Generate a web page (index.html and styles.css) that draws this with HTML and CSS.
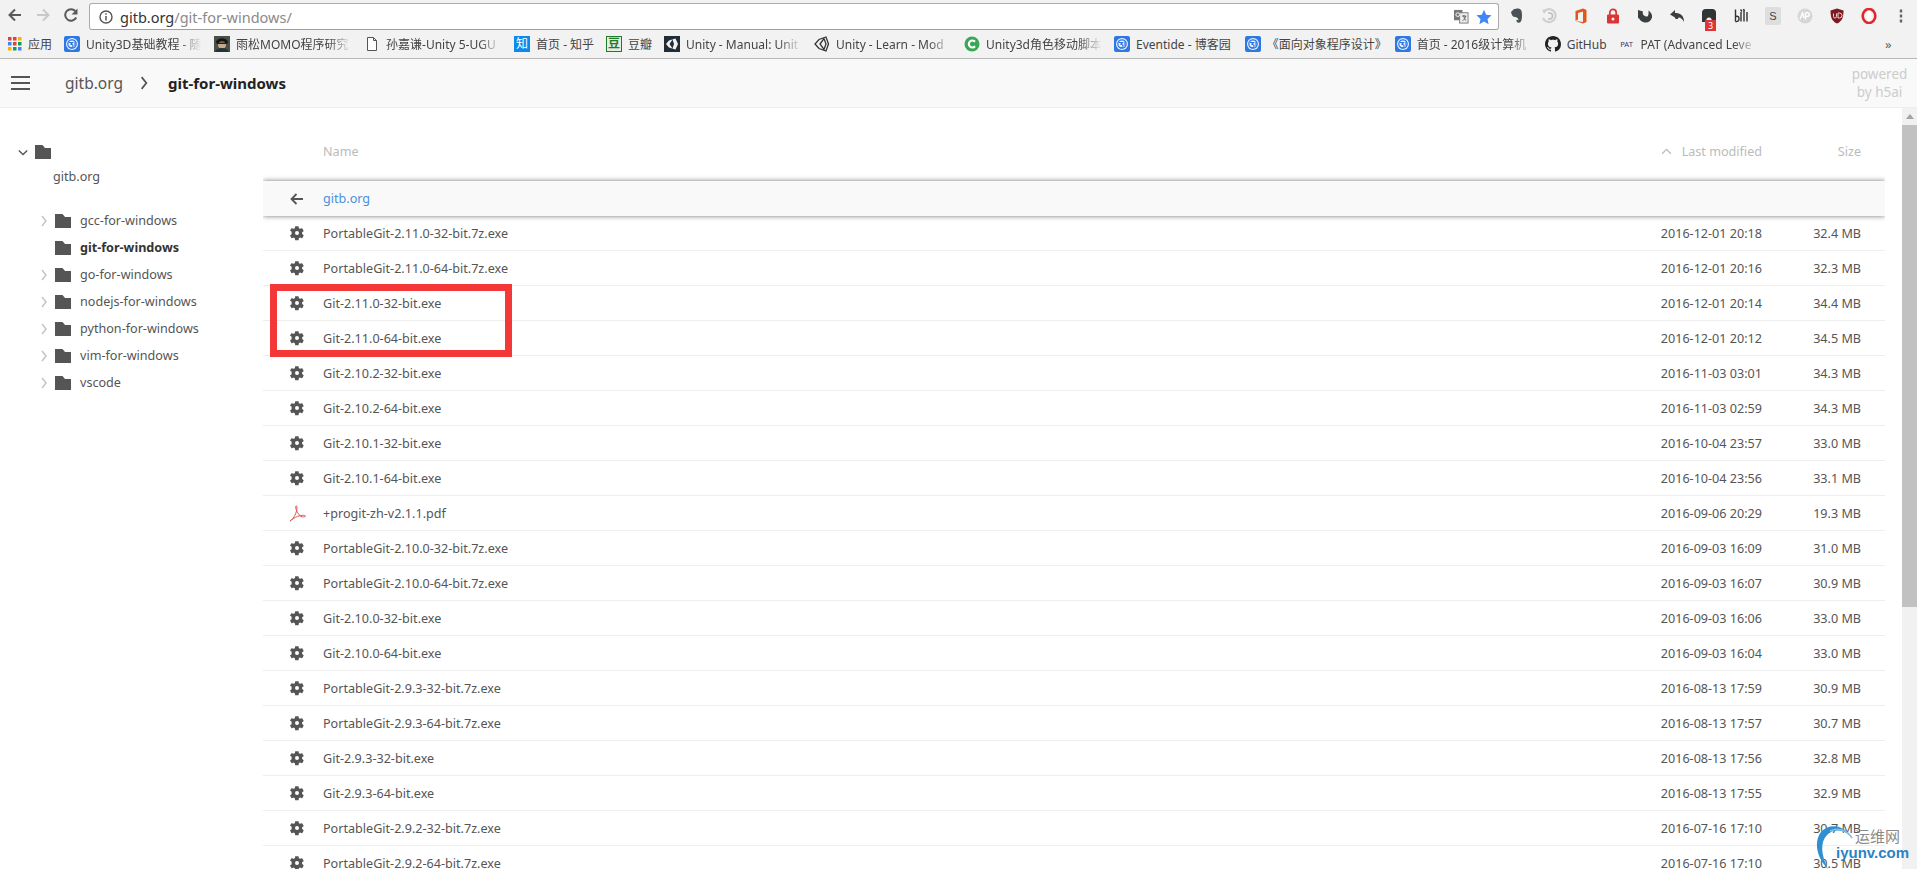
FILE: index.html
```html
<!DOCTYPE html>
<html lang="zh">
<head>
<meta charset="utf-8">
<title>git-for-windows</title>
<link rel="stylesheet" href="styles.css">
</head>
<body>
<svg class="defs" width="0" height="0" aria-hidden="true">
  <symbol id="gear" viewBox="0 0 24 24"><path fill-rule="evenodd" d="M19.6 13c.1-.3.1-.7.1-1s0-.7-.1-1l2.2-1.7c.2-.2.3-.4.1-.7l-2.1-3.6c-.1-.2-.4-.3-.6-.2l-2.6 1c-.5-.4-1.100-.8-1.800-1l-.4-2.700c0-.3-.2-.4-.5-.4h-4.200c-.3 0-.5.2-.5.4l-.4 2.700c-.6.3-1.200.6-1.800 1l-2.600-1c-.2-.1-.5 0-.6.2L1.700 7.900c-.1.2-.1.5.1.700L4 10.300c-.1.300-.1.700-.1 1.700s0 1.400.1 1.700l-2.200 1.700c-.2.2-.3.4-.1.700l2.100 3.600c.1.2.4.3.6.2l2.600-1c.5.4 1.100.8 1.800 1l.4 2.700c0 .3.2.4.5.4h4.200c.3 0 .5-.2.5-.4l.4-2.700c.6-.3 1.200-.6 1.800-1l2.600 1c.2.1.5 0 .6-.2l2.100-3.600c.1-.2.1-.5-.1-.7zM12 15a3 3 0 1 1 0-6 3 3 0 0 1 0 6z"/></symbol>
  <symbol id="folder" viewBox="0 0 16 14"><path d="M0 0h7.500l2.500 3h6v11H0z"/></symbol>
  <symbol id="right" viewBox="0 0 6 12"><path d="M1 1l4 5-4 5" fill="none" stroke="currentColor" stroke-width="1.500"/></symbol>
  <symbol id="blog" viewBox="0 0 16 16"><rect width="16" height="16" rx="2" fill="#2f78e4"/><circle cx="8" cy="8" r="6" fill="#e8f1fd"/><circle cx="8" cy="8" r="4.200" fill="none" stroke="#2f78e4" stroke-width="1.300"/><path d="M5 6.500h3.500L6.500 8.500a1.800 1.800 0 1 1-1 2" fill="none" stroke="#2f78e4" stroke-width="1.200"/><path d="M11 5.500v5" stroke="#2f78e4" stroke-width="1.200"/></symbol>
</svg>

<div class="chrome">
  <div class="toolbar">
    <div class="nav">
      <svg class="nav-ico" viewBox="0 0 16 16"><path d="M14 8H3M8 2.500L2.500 8 8 13.500" fill="none" stroke="#5a5a5a" stroke-width="2"/></svg>
      <svg class="nav-ico" viewBox="0 0 16 16"><path d="M2 8h11M8 2.500L13.500 8 8 13.500" fill="none" stroke="#c9c9c9" stroke-width="2"/></svg>
      <svg class="nav-ico" viewBox="0 0 16 16"><path d="M13.200 10.500A5.800 5.800 0 1 1 12.400 4.200" fill="none" stroke="#5a5a5a" stroke-width="2"/><path d="M14.500 1.500v6h-6z" fill="#5a5a5a"/></svg>
    </div>
    <div class="omnibox">
      <svg class="info" viewBox="0 0 14 14"><circle cx="7" cy="7" r="6" fill="none" stroke="#555" stroke-width="1.400"/><path d="M7 6v4.500M7 3.300v1.500" stroke="#555" stroke-width="1.500"/></svg>
      <span class="url"><span class="url-host">gitb.org</span>/git-for-windows/</span>
      <svg class="tr" viewBox="0 0 16 16"><rect x="0" y="1" width="9" height="11" fill="#777"/><rect x="6" y="4" width="9" height="11" fill="#eee" stroke="#777"/><path d="M8.500 7.500h4.500M10.500 6.500c0 3 1 5 2.500 6M12.500 7.500c-.5 2.500-1.500 4-3.500 5" fill="none" stroke="#555" stroke-width=".9"/><circle cx="4" cy="6" r="2" fill="none" stroke="#fff"/></svg>
      <svg class="star" viewBox="0 0 16 16"><path d="M8 .8l2.200 4.900 5.300.6-4 3.600 1.100 5.300L8 12.500l-4.600 2.700 1.100-5.300-4-3.600 5.300-.6z" fill="#4285f4"/></svg>
    </div>
    <div class="exts">
      <span class="ext"><svg viewBox="0 0 16 16"><path d="M2 4l3-3h1.500c1-.8 4-.6 5 .5 1 .6 1.500 3 1.500 6 0 3.500-.5 7-3 7.300-2 0-2.800-1-2.500-2.500.5-.8 1.500-.5 2 0-.5-3-2-3-3.500-3.300C4 9 2.500 7 2 4z" fill="#4a5355"/></svg></span>
      <span class="ext"><svg viewBox="0 0 16 16"><path d="M3 3.500A6.500 6.500 0 1 1 2 10" fill="none" stroke="#cfcfcf" stroke-width="2.200"/><path d="M1 1.500l5 .5-3 4z" fill="#cfcfcf"/><path d="M7 5h1.500a3 3 0 0 1 0 6H7" fill="none" stroke="#bdbdbd" stroke-width="1.500"/></svg></span>
      <span class="ext"><svg viewBox="0 0 16 16"><path d="M2.500 3L10 .5l3.500 1.500v12L10 15.500 2.500 13l7.500 1V3.500L5 5v6.500l-2.500 1.500z" fill="#e0561b"/></svg></span>
      <span class="ext"><svg viewBox="0 0 16 16"><rect x="2" y="6.500" width="12" height="9" rx="1" fill="#dd3333"/><path d="M4.800 7V4.500a3.200 3.200 0 0 1 6.400 0V7" fill="none" stroke="#dd3333" stroke-width="1.700"/><circle cx="8" cy="11" r="1.500" fill="#fff"/></svg></span>
      <span class="ext"><svg viewBox="0 0 16 16"><path d="M1 2l5 1.500C5 6 7 8.500 10 8.500c1 0 2-2 1.500-6C14 4 15.500 7 15 9.500c-.8 3.500-4 5.500-7.500 5C4.500 14 2.500 12 2 10L1 10.500z" fill="#3a3f42"/></svg></span>
      <span class="ext"><svg viewBox="0 0 16 16"><path d="M1 6.500L6 2v3c5 0 9 2 9 9-1.500-3-3.500-4.500-5-4.500-.5 0-1 .5-1 1.500H6.500L6 9.500z" fill="#3a3f42"/></svg></span>
      <span class="ext ext-badged"><svg viewBox="0 0 16 16"><path d="M1 14V4.500C1 2.500 2.500 1 4.500 1h7c2 0 3.500 1.500 3.500 3.500V14h-4c0-3-1-4.500-3-4.500S5 11 5 14z" fill="#2f3437"/></svg><span class="badge">3</span></span>
      <span class="ext"><svg viewBox="0 0 16 16"><path d="M2.500 1.500v12M2.500 8.500c3-1 3.500 1 3.500 2.500s-1 3-3.500 2.500M8 4v9.500M11 2v11.500M14 4v9.500M7.500 1.500l1.500 2M10.500 1l1 2" fill="none" stroke="#333" stroke-width="1.400"/></svg></span>
      <span class="ext"><span class="ext-s">S</span></span>
      <span class="ext"><svg viewBox="0 0 16 16"><circle cx="8" cy="8" r="7.500" fill="#d6d6d6"/><path d="M3 11l2.500-6 1.500 5M8.500 4.500v7M8.500 5c3-1 4.500.5 3.500 2.500-.7 1-2 1-3.500.8" fill="none" stroke="#fff" stroke-width="1.400"/></svg></span>
      <span class="ext"><svg viewBox="0 0 16 16"><path d="M8 .5l6.500 2c0 7-1.500 11-6.500 13-5-2-6.500-6-6.500-13z" fill="#7d1a1e"/><path d="M4.500 5.500v3a1.500 1.500 0 0 0 3 0v-3M9 5h1.500a2.500 2.500 0 0 1 0 5H9z" fill="none" stroke="#e8d9d9" stroke-width="1"/></svg></span>
      <span class="ext"><svg viewBox="0 0 16 16"><ellipse cx="8" cy="8" rx="6.300" ry="7" fill="none" stroke="#e1282d" stroke-width="2.600"/><ellipse cx="8" cy="8" rx="2.500" ry="5.200" fill="#fff"/></svg></span>
      <span class="ext"><svg viewBox="0 0 16 16"><path d="M8 1.500v3M8 6.500v3M8 11.500v3" stroke="#666" stroke-width="2.400"/></svg></span>
    </div>
  </div>
  <div class="bookmarks">
    <span class="bm"><svg class="fav-apps" viewBox="0 0 14 14"><g><rect width="3.500" height="3.500" fill="#db4437"/><rect x="5" width="3.500" height="3.500" fill="#db4437"/><rect x="10" width="3.500" height="3.500" fill="#f4b400"/><rect y="5" width="3.500" height="3.500" fill="#4285f4"/><rect x="5" y="5" width="3.500" height="3.500" fill="#db4437"/><rect x="10" y="5" width="3.500" height="3.500" fill="#0f9d58"/><rect y="10" width="3.500" height="3.500" fill="#f4b400"/><rect x="5" y="10" width="3.500" height="3.500" fill="#0f9d58"/><rect x="10" y="10" width="3.500" height="3.500" fill="#4285f4"/></g></svg><span>应用</span></span>
    <span class="bm"><svg class="fav"><use href="#blog"/></svg><span class="bm-fade">Unity3D基础教程 - 随</span></span>
    <span class="bm"><svg class="fav" viewBox="0 0 16 16"><rect width="16" height="16" fill="#4a4f48"/><path d="M2 6c1-5 11-5 12 0l-1 2H3z" fill="#15181a"/><ellipse cx="8" cy="9" rx="4" ry="3.500" fill="#c9a98c"/><path d="M3 6.500h10v1.500H3z" fill="#1c1f22"/><path d="M1 16c1-3 4-4 7-4s6 1 7 4z" fill="#22343a"/></svg><span class="bm-fade">雨松MOMO程序研究</span></span>
    <span class="bm"><svg class="fav" viewBox="0 0 16 16"><path d="M3.500 1.500h6l3 3v10h-9z M9.500 1.500v3h3" fill="#fff" stroke="#555" stroke-width="1"/></svg><span class="bm-fade">孙嘉谦-Unity 5-UGU</span></span>
    <span class="bm"><span class="fav-zhi">知</span><span class="bm-zhihu">首页 - 知乎</span></span>
    <span class="bm"><span class="fav-dou">豆</span><span class="bm-dou">豆瓣</span></span>
    <span class="bm"><svg class="fav" viewBox="0 0 16 16"><rect width="16" height="16" fill="#222c37"/><path d="M11.500 2.500L5 4.500l-3 3.500 3 3.500 6.500 2L14 8z M5.500 8l3-4.500 1.500 4.500-1.500 4.500z" fill="#f2f2f2" fill-rule="evenodd"/></svg><span class="bm-fade">Unity - Manual: Unit</span></span>
    <span class="bm"><svg class="fav" viewBox="0 0 16 16"><path d="M12 1L5 3.500 1 8l4 4.500 7 2.500 2.500-7z M6 8l4-5.500 2 5.500-2 5.500z" fill="none" stroke="#333" stroke-width="1.300"/></svg><span class="bm-fade">Unity - Learn - Mod</span></span>
    <span class="bm"><svg class="fav" viewBox="0 0 16 16"><circle cx="8" cy="8" r="7.500" fill="#3aa757"/><path d="M11 5.700a3.500 3.500 0 1 0 0 4.600" fill="none" stroke="#fff" stroke-width="2.200"/></svg><span class="bm-fade">Unity3d角色移动脚本</span></span>
    <span class="bm"><svg class="fav"><use href="#blog"/></svg><span>Eventide - 博客园</span></span>
    <span class="bm bm-wide"><svg class="fav"><use href="#blog"/></svg><span class="bm-book">《面向对象程序设计》</span></span>
    <span class="bm"><svg class="fav"><use href="#blog"/></svg><span class="bm-fade">首页 - 2016级计算机</span></span>
    <span class="bm"><svg class="fav" viewBox="0 0 16 16"><path fill="#222" d="M8 0C3.580 0 0 3.580 0 8c0 3.540 2.290 6.530 5.470 7.590.4.070.55-.17.55-.38 0-.19-.01-.82-.01-1.490-2.010.37-2.530-.49-2.690-.94-.09-.23-.48-.94-.82-1.130-.28-.15-.68-.52-.01-.53.63-.01 1.080.58 1.230.82.72 1.210 1.870.87 2.330.66.07-.52.28-.87.51-1.070-1.780-.2-3.640-.89-3.640-3.950 0-.87.31-1.590.82-2.150-.08-.2-.36-1.020.08-2.120 0 0 .67-.21 2.200.82.64-.18 1.320-.27 2-.27.68 0 1.360.09 2 .27 1.530-1.040 2.200-.82 2.200-.82.44 1.100.16 1.920.08 2.120.51.56.82 1.270.82 2.150 0 3.070-1.870 3.750-3.650 3.950.29.25.54.73.54 1.480 0 1.070-.01 1.930-.01 2.200 0 .21.15.46.55.38A8.013 8.013 0 0 0 16 8c0-4.420-3.580-8-8-8z"/></svg><span>GitHub</span></span>
    <span class="bm"><span class="fav-pat">PAT</span><span class="bm-fade">PAT (Advanced Leve</span></span>
    <span class="bm-more">»</span>
  </div>
</div>

<header class="crumbs">
  <span class="burger"></span>
  <span class="crumb">gitb.org</span>
  <svg class="crumb-sep"><use href="#right"/></svg>
  <span class="crumb crumb-active">git-for-windows</span>
  <span class="powered">powered<br>by h5ai</span>
</header>

<div class="main">
  <aside class="sidebar">
    <div class="root-row">
      <svg class="root-caret" viewBox="0 0 12 8"><path d="M1 1.500l5 5 5-5" fill="none" stroke="#555" stroke-width="1.600"/></svg>
      <svg class="root-folder"><use href="#folder"/></svg>
    </div>
    <div class="root-name">gitb.org</div>
    <ul class="tree">
      <li class="tree-row"><svg class="tree-caret"><use href="#right"/></svg><svg class="tree-folder"><use href="#folder"/></svg>gcc-for-windows</li>
      <li class="tree-row tree-active"><span class="tree-caret"></span><svg class="tree-folder"><use href="#folder"/></svg>git-for-windows</li>
      <li class="tree-row"><svg class="tree-caret"><use href="#right"/></svg><svg class="tree-folder"><use href="#folder"/></svg>go-for-windows</li>
      <li class="tree-row"><svg class="tree-caret"><use href="#right"/></svg><svg class="tree-folder"><use href="#folder"/></svg>nodejs-for-windows</li>
      <li class="tree-row"><svg class="tree-caret"><use href="#right"/></svg><svg class="tree-folder"><use href="#folder"/></svg>python-for-windows</li>
      <li class="tree-row"><svg class="tree-caret"><use href="#right"/></svg><svg class="tree-folder"><use href="#folder"/></svg>vim-for-windows</li>
      <li class="tree-row"><svg class="tree-caret"><use href="#right"/></svg><svg class="tree-folder"><use href="#folder"/></svg>vscode</li>
    </ul>
  </aside>

  <section class="list">
    <div class="list-head">
      <span></span>
      <span>Name</span>
      <span class="modified"><svg class="sort" viewBox="0 0 12 8"><path d="M1 6.500l5-5 5 5" fill="none" stroke="#bbb" stroke-width="1.500"/></svg>Last modified</span>
      <span class="num">Size</span>
    </div>
    <div class="row-back">
      <span class="cell-ico"><svg class="ico-back" viewBox="0 0 16 16"><path d="M14 8H3M7.500 3L2.500 8l5 5" fill="none" stroke="#555" stroke-width="1.800"/></svg></span>
      <span class="back-link">gitb.org</span>
    </div>
    <div class="row"><span class="cell-ico"><svg class="gear"><use href="#gear"/></svg></span><span>PortableGit-2.11.0-32-bit.7z.exe</span><span class="num">2016-12-01 20:18</span><span class="num">32.4 MB</span></div>
    <div class="row"><span class="cell-ico"><svg class="gear"><use href="#gear"/></svg></span><span>PortableGit-2.11.0-64-bit.7z.exe</span><span class="num">2016-12-01 20:16</span><span class="num">32.3 MB</span></div>
    <div class="row"><span class="cell-ico"><svg class="gear"><use href="#gear"/></svg></span><span>Git-2.11.0-32-bit.exe</span><span class="num">2016-12-01 20:14</span><span class="num">34.4 MB</span></div>
    <div class="row"><span class="cell-ico"><svg class="gear"><use href="#gear"/></svg></span><span>Git-2.11.0-64-bit.exe</span><span class="num">2016-12-01 20:12</span><span class="num">34.5 MB</span></div>
    <div class="row"><span class="cell-ico"><svg class="gear"><use href="#gear"/></svg></span><span>Git-2.10.2-32-bit.exe</span><span class="num">2016-11-03 03:01</span><span class="num">34.3 MB</span></div>
    <div class="row"><span class="cell-ico"><svg class="gear"><use href="#gear"/></svg></span><span>Git-2.10.2-64-bit.exe</span><span class="num">2016-11-03 02:59</span><span class="num">34.3 MB</span></div>
    <div class="row"><span class="cell-ico"><svg class="gear"><use href="#gear"/></svg></span><span>Git-2.10.1-32-bit.exe</span><span class="num">2016-10-04 23:57</span><span class="num">33.0 MB</span></div>
    <div class="row"><span class="cell-ico"><svg class="gear"><use href="#gear"/></svg></span><span>Git-2.10.1-64-bit.exe</span><span class="num">2016-10-04 23:56</span><span class="num">33.1 MB</span></div>
    <div class="row"><span class="cell-ico"><svg class="pdf" viewBox="0 0 18 18"><path d="M1 17c2-1 4-3.500 6-7.500 1-2.500 1.500-5 1.500-7.500 0-1.300-1.500-1.300-1.500 0 0 3 3 8.500 5.500 10 1.500.8 4.500 1 5 0 .3-.8-1.500-1.200-3.500-1-3 .2-7 1.500-9.500 3.500C2.500 15.500 1.500 17 1 17z" fill="none" stroke="#d9534f" stroke-width="1"/></svg></span><span>+progit-zh-v2.1.1.pdf</span><span class="num">2016-09-06 20:29</span><span class="num">19.3 MB</span></div>
    <div class="row"><span class="cell-ico"><svg class="gear"><use href="#gear"/></svg></span><span>PortableGit-2.10.0-32-bit.7z.exe</span><span class="num">2016-09-03 16:09</span><span class="num">31.0 MB</span></div>
    <div class="row"><span class="cell-ico"><svg class="gear"><use href="#gear"/></svg></span><span>PortableGit-2.10.0-64-bit.7z.exe</span><span class="num">2016-09-03 16:07</span><span class="num">30.9 MB</span></div>
    <div class="row"><span class="cell-ico"><svg class="gear"><use href="#gear"/></svg></span><span>Git-2.10.0-32-bit.exe</span><span class="num">2016-09-03 16:06</span><span class="num">33.0 MB</span></div>
    <div class="row"><span class="cell-ico"><svg class="gear"><use href="#gear"/></svg></span><span>Git-2.10.0-64-bit.exe</span><span class="num">2016-09-03 16:04</span><span class="num">33.0 MB</span></div>
    <div class="row"><span class="cell-ico"><svg class="gear"><use href="#gear"/></svg></span><span>PortableGit-2.9.3-32-bit.7z.exe</span><span class="num">2016-08-13 17:59</span><span class="num">30.9 MB</span></div>
    <div class="row"><span class="cell-ico"><svg class="gear"><use href="#gear"/></svg></span><span>PortableGit-2.9.3-64-bit.7z.exe</span><span class="num">2016-08-13 17:57</span><span class="num">30.7 MB</span></div>
    <div class="row"><span class="cell-ico"><svg class="gear"><use href="#gear"/></svg></span><span>Git-2.9.3-32-bit.exe</span><span class="num">2016-08-13 17:56</span><span class="num">32.8 MB</span></div>
    <div class="row"><span class="cell-ico"><svg class="gear"><use href="#gear"/></svg></span><span>Git-2.9.3-64-bit.exe</span><span class="num">2016-08-13 17:55</span><span class="num">32.9 MB</span></div>
    <div class="row"><span class="cell-ico"><svg class="gear"><use href="#gear"/></svg></span><span>PortableGit-2.9.2-32-bit.7z.exe</span><span class="num">2016-07-16 17:10</span><span class="num">30.7 MB</span></div>
    <div class="row"><span class="cell-ico"><svg class="gear"><use href="#gear"/></svg></span><span>PortableGit-2.9.2-64-bit.7z.exe</span><span class="num">2016-07-16 17:10</span><span class="num">30.5 MB</span></div>
  </section>

  <div class="scrollbar">
    <span class="scroll-up"></span>
    <span class="scroll-thumb"></span>
  </div>

  <div class="highlight"></div>
</div>

<div class="watermark">
  <svg class="wm-swoosh" viewBox="0 0 44 47"><path d="M37 14C31 3 16 1 8 10 1 19 3 35 15 47 8 33 7 20 14 13c6-6 16-6 23 1z" fill="#2f8fd0"/><path d="M39 16C34 8 25 5 17 9" fill="none" stroke="#7cc0e8" stroke-width="1.500"/></svg>
  <span class="wm-cn">运维网</span>
  <span class="wm-en">iyunv.com</span>
</div>
</body>
</html>
```

FILE: styles.css
```css
* { box-sizing: border-box; }
html, body { margin: 0; height: 869px; overflow: hidden; }
body {
  position: relative;
  display: flex;
  flex-direction: column;
  background: #fff;
  color: #555;
  font-family: "Noto Sans", "Noto Sans CJK SC", sans-serif;
  font-size: 12.600px;
}
.defs { position: absolute; }

.chrome { background: #f2f2f2; border-bottom: 1px solid #b8b8b8; height: 59px; flex: none; }
.toolbar { display: flex; height: 29px; padding-left: 1px; align-items: flex-start; }
.nav { display: flex; padding-top: 3px; }
.nav-ico { width: 16px; height: 16px; margin: 4px 6px 0; }
.omnibox {
  flex: 1;
  display: flex;
  align-items: center;
  height: 27px;
  margin: 3px 0 0 4px;
  padding: 0 6px 0 9px;
  background: #fff;
  border: 1px solid #ababab;
  border-bottom-color: #a0a0a0;
  border-radius: 3px;
}
.info { width: 14px; height: 14px; margin-right: 7px; }
.url { flex: 1; font-size: 14.500px; color: #8a8a8a; }
.url-host { color: #333; }
.tr { width: 15px; height: 15px; margin-right: 7px; }
.star { width: 16px; height: 16px; }
.exts { display: flex; margin-left: 2px; }
.ext { position: relative; width: 32px; height: 32px; display: flex; align-items: center; justify-content: center; }
.ext svg { width: 16px; height: 16px; }
.badge { position: absolute; left: 12px; top: 20px; width: 11px; height: 11px; background: #e03535; color: #fff; font-size: 9px; line-height: 11px; text-align: center; }
.ext-s { width: 16px; height: 18px; background: #dedede; border-radius: 2px; color: #444; font: 11px/18px "Liberation Sans", sans-serif; text-align: center; }

.bookmarks { display: flex; align-items: center; height: 29px; padding: 1px 0 0 8px; gap: 12px; font-size: 12px; color: #444; }
.bm { display: flex; align-items: center; gap: 6px; white-space: nowrap; flex: none; }
.fav { width: 16px; height: 16px; flex: none; }
.fav-apps { width: 14px; height: 14px; flex: none; }
.bm-fade {
  width: 116px;
  overflow: visible;
  -webkit-mask-image: linear-gradient(to right, #000 80%, transparent);
  mask-image: linear-gradient(to right, #000 80%, transparent);
}
.bm-zhihu { width: 58px; }
.bm-dou { width: 24px; }
.bm-wide { margin-left: 2px; }
.bm-book { width: 116px; }
.fav-zhi, .fav-dou { width: 16px; height: 16px; flex: none; color: #fff; font-size: 12px; line-height: 16px; text-align: center; }
.fav-zhi { background: #0f88eb; }
.fav-dou { background: #e4efe0; color: #1f7a2a; font-weight: 700; outline: 1px solid #1f7a2a; outline-offset: -1px; }
.fav-pat { width: 16px; flex: none; color: #1c3f78; font-size: 7.500px; line-height: 16px; text-align: center; }
.bm-more { position: absolute; left: 1885px; top: 35px; font-size: 13px; color: #666; }

.crumbs {
  flex: none;
  display: flex;
  align-items: center;
  height: 49px;
  padding-left: 11px;
  background: #f9f9f9;
  border-bottom: 1px solid #eee;
  font-size: 15.500px;
  color: #555;
}
.burger { width: 19px; height: 14px; margin-right: 35px; border-top: 2px solid #555; border-bottom: 2px solid #555; position: relative; }
.burger::after { content: ""; position: absolute; left: 0; right: 0; top: 4px; height: 2px; background: #555; }
.crumb-sep { width: 8px; height: 14px; margin: 0 20px 0 17px; color: #555; }
.crumb-active { color: #222; font-weight: 700; font-size: 15px; }
.powered { margin-left: auto; width: 63px; margin-right: 6px; text-align: center; line-height: 18px; font-size: 13.500px; color: #ccc; }

.main { flex: 1; display: flex; position: relative; min-height: 0; }
.sidebar { flex: none; width: 263px; padding-top: 37px; }
.root-row { display: flex; align-items: center; height: 14px; padding-left: 18px; }
.root-caret { width: 10px; height: 7px; margin-right: 7px; }
.root-folder { width: 16px; height: 14px; fill: #555; }
.root-name { margin: 8px 0 0 53px; line-height: 20px; }
.tree { list-style: none; margin: 20px 0 0; padding: 0 0 0 41px; }
.tree-row { display: flex; align-items: center; height: 27px; }
.tree-caret { flex: none; width: 6px; height: 12px; margin-right: 8px; color: #c4c4c4; }
.tree-folder { flex: none; width: 16px; height: 14px; margin-right: 9px; fill: #555; }
.tree-active { color: #333; font-weight: 700; }

.list { flex: none; width: 1622px; height: 761px; padding: 0; overflow: hidden; }
.list-head, .row {
  display: grid;
  grid-template-columns: 60px 1fr 140px 99px;
  padding-right: 24px;
  align-items: center;
}
.list-head { height: 73px; padding-top: 30px; padding-bottom: 16px; color: #bbb; }
.modified { display: flex; align-items: center; justify-content: flex-end; }
.sort { width: 11px; height: 7px; margin-right: 10px; }
.num { text-align: right; white-space: nowrap; }
.row-back {
  display: flex;
  align-items: center;
  height: 35px;
  background: #f9f9f9;
  box-shadow: 0 0 5px rgba(0,0,0,.55);
  position: relative;
}
.back-link { color: #4a90d9; }
.row { height: 35px; border-bottom: 1px solid #eee; }
.cell-ico { display: flex; align-items: center; width: 60px; padding-left: 26px; }
.gear { width: 16px; height: 16px; fill: #555; }
.ico-back { width: 16px; height: 16px; }
.pdf { width: 17px; height: 17px; }

.scrollbar { flex: none; width: 15px; height: 761px; margin-left: 17px; background: #f1f1f1; display: flex; flex-direction: column; }
.scroll-up { height: 17px; display: flex; align-items: center; justify-content: center; }
.scroll-up::before { content: ""; border: 4px solid transparent; border-top: 0; border-bottom: 5px solid #a3a3a3; }
.scroll-thumb { height: 482px; background: #c1c1c1; }

.highlight { position: absolute; left: 270px; top: 176px; width: 242px; height: 73px; border: 7px solid #f43838; }

.watermark { position: absolute; left: 1813px; top: 822px; width: 104px; height: 47px; }
.wm-swoosh { position: absolute; left: 0; top: 0; width: 44px; height: 47px; }
.wm-cn { position: absolute; left: 42px; top: 5px; font-size: 15px; line-height: 18px; color: #8a8a8a; font-family: "Noto Sans CJK SC", sans-serif; }
.wm-en { position: absolute; left: 23px; top: 21px; font: 700 15px/20px "Liberation Sans", sans-serif; color: #2b82c4; }
```
